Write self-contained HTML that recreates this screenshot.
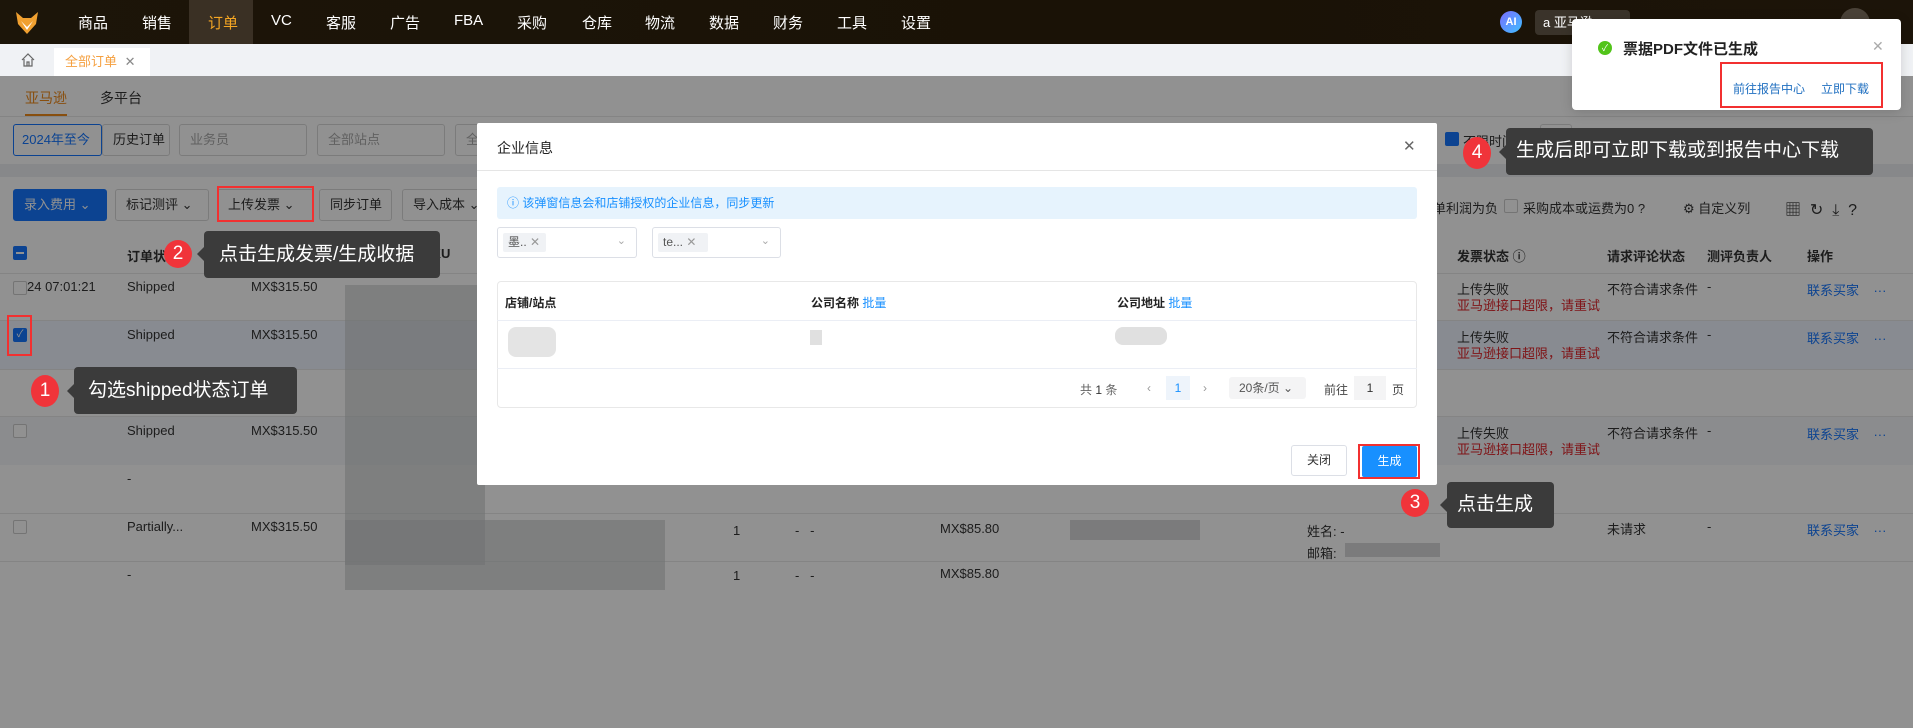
<!DOCTYPE html>
<html><head><meta charset="utf-8"><style>
*{margin:0;padding:0;box-sizing:border-box}
body{width:1913px;height:728px;overflow:hidden;position:relative;background:#fff;font-family:"Liberation Sans","Noto Sans CJK SC",sans-serif;font-size:13px;color:#333}
.a{position:absolute;white-space:nowrap}
.hd{left:0;top:0;width:1913px;height:44px;background:linear-gradient(90deg,#1c1509,#1a1206 60%,#1c1409);top:0}
.nav{color:#fff;font-size:15px;top:12px}
.btn{border:1px solid #d9d9d9;border-radius:3px;background:#fff;height:32px;line-height:30px;padding:0 10px;font-size:13px;color:#333}
.ov{left:0;top:76px;width:1913px;height:652px;background:rgba(0,0,0,0.43)}
.cb{width:14px;height:14px;border:1px solid #ccc;border-radius:2px;background:#fff}
.tip{background:#3b3b3b;color:#fff;border-radius:4px;font-size:19px;line-height:1}
.circ{width:28px;height:28px;border-radius:50%;background:#f0343a;color:#fff;font-size:19px;text-align:center;line-height:28px}
.arr{width:0;height:0;border-top:7px solid transparent;border-bottom:7px solid transparent;border-right:7px solid #3b3b3b}
.blur{background:#c7c9cc}
</style></head><body>
<!-- header -->
<div class="a hd"></div>
<svg class="a" style="left:14px;top:10px" width="26" height="26" viewBox="0 0 26 26"><path d="M2 2 L9 8 L17 8 L24 2 L22 14 L13 24 L4 14Z" fill="#f0a030"/><path d="M7 11 L13 17 L19 11 L13 20Z" fill="#fff"/></svg>
<div class="a" style="left:189px;top:0;width:64px;height:44px;background:#3a3024"></div>
<div class="a nav" style="left:78px">商品</div><div class="a nav" style="left:142px">销售</div><div class="a nav" style="left:208px;color:#f5a623">订单</div><div class="a nav" style="left:271px">VC</div><div class="a nav" style="left:326px">客服</div><div class="a nav" style="left:390px">广告</div><div class="a nav" style="left:454px">FBA</div><div class="a nav" style="left:517px">采购</div><div class="a nav" style="left:582px">仓库</div><div class="a nav" style="left:645px">物流</div><div class="a nav" style="left:709px">数据</div><div class="a nav" style="left:773px">财务</div><div class="a nav" style="left:837px">工具</div><div class="a nav" style="left:901px">设置</div>
<div class="a" style="left:1500px;top:11px;width:22px;height:22px;border-radius:50%;background:linear-gradient(135deg,#7a6cff,#3ec0ff);color:#fff;font-size:11px;font-weight:bold;text-align:center;line-height:22px">AI</div>
<div class="a" style="left:1535px;top:10px;width:95px;height:25px;border-radius:4px;background:#3a332a;color:#fff;font-size:13px;line-height:25px;padding-left:8px">a 亚马逊</div>
<div class="a" style="left:1840px;top:8px;width:30px;height:30px;border-radius:50%;background:#4a4238"></div>
<!-- tabs -->
<div class="a" style="left:0;top:44px;width:1913px;height:32px;background:#f0f2f5"></div>
<svg class="a" style="left:20px;top:52px" width="16" height="16" viewBox="0 0 16 16"><path d="M2 8 L8 2 L14 8 M4 7 V14 H12 V7 M7 14 V10 H9 V14" fill="none" stroke="#666" stroke-width="1.2"/></svg>
<div class="a" style="left:54px;top:48px;width:96px;height:28px;background:#fff;color:#f5a040;line-height:28px;padding-left:11px">全部订单 <span style="color:#888;margin-left:4px">✕</span></div>
<!-- page -->
<div class="a" style="left:25px;top:88px;font-size:14px;color:#f08b1c">亚马逊</div>
<div class="a" style="left:25px;top:114px;width:42px;height:2px;background:#f08b1c"></div>
<div class="a" style="left:100px;top:88px;font-size:14px">多平台</div>
<div class="a" style="left:0;top:116px;width:1913px;height:1px;background:#e8e8e8"></div>
<div class="a btn" style="left:13px;top:124px;border-color:#1677ff;color:#1677ff;width:89px;padding:0 8px">2024年至今</div>
<div class="a btn" style="left:102px;top:124px;width:68px">历史订单</div>
<div class="a btn" style="left:179px;top:124px;width:128px;color:#aaa">业务员</div>
<div class="a btn" style="left:317px;top:124px;width:128px;color:#aaa">全部站点</div>
<div class="a btn" style="left:455px;top:124px;width:40px;color:#aaa">全</div>
<div class="a" style="left:1445px;top:132px;width:14px;height:14px;background:#1677ff;border-radius:2px"></div>
<div class="a" style="left:1463px;top:131px">不限时间</div>
<div class="a btn" style="left:1540px;top:124px;width:32px"></div>
<div class="a" style="left:1580px;top:131px">重置</div>
<div class="a" style="left:0;top:164px;width:1913px;height:13px;background:#eef0f3"></div>
<div class="a btn" style="left:13px;top:189px;width:94px;background:#1677ff;border-color:#1677ff;color:#fff">录入费用 ⌄</div>
<div class="a btn" style="left:115px;top:189px;width:94px">标记测评 ⌄</div>
<div class="a btn" style="left:217px;top:189px;width:97px">上传发票 ⌄</div>
<div class="a btn" style="left:319px;top:189px;width:73px">同步订单</div>
<div class="a btn" style="left:402px;top:189px;width:80px">导入成本 ⌄</div>
<div class="a" style="left:1433px;top:198px">单利润为负</div>
<div class="a cb" style="left:1504px;top:199px"></div>
<div class="a" style="left:1523px;top:198px">采购成本或运费为0 ?</div>
<div class="a" style="left:1683px;top:198px">⚙ 自定义列</div>
<div class="a" style="left:1785px;top:196px;font-size:16px">▦ &nbsp;↻ &nbsp;⤓ &nbsp;?</div>
<!-- table -->
<div class="a" style="left:0;top:320px;width:1913px;height:49px;background:#f0f5ff"></div>
<div class="a" style="left:0;top:416px;width:1913px;height:49px;background:#f5f7fa"></div>
<div class="a" style="left:0;top:273px;width:1913px;height:1px;background:#e8e8e8"></div>
<div class="a" style="left:0;top:320px;width:1913px;height:1px;background:#e8e8e8"></div>
<div class="a" style="left:0;top:369px;width:1913px;height:1px;background:#e8e8e8"></div>
<div class="a" style="left:0;top:416px;width:1913px;height:1px;background:#e8e8e8"></div>
<div class="a" style="left:0;top:513px;width:1913px;height:1px;background:#e8e8e8"></div>
<div class="a" style="left:0;top:561px;width:1913px;height:1px;background:#e8e8e8"></div>
<div class="a" style="left:13px;top:246px;width:14px;height:14px;background:#1677ff;border-radius:2px"><div style="margin:6px 3px;width:8px;height:2px;background:#fff"></div></div>
<div class="a" style="left:127px;top:246px;font-weight:bold">订单状</div>
<div class="a" style="left:423px;top:246px;font-weight:bold">SKU</div>
<div class="a" style="left:1457px;top:246px;font-weight:bold">发票状态 ⓘ</div>
<div class="a" style="left:1607px;top:246px;font-weight:bold">请求评论状态</div>
<div class="a" style="left:1707px;top:246px;font-weight:bold">测评负责人</div>
<div class="a" style="left:1807px;top:246px;font-weight:bold">操作</div>
<div class="a cb" style="left:13px;top:281px"></div><div class="a" style="left:27px;top:279px">24 07:01:21</div><div class="a" style="left:127px;top:279px">Shipped</div><div class="a" style="left:251px;top:279px">MX$315.50</div>
<div class="a" style="left:13px;top:328px;width:14px;height:14px;background:#1677ff;border-radius:2px;color:#fff;font-size:10px;text-align:center;line-height:14px">✓</div><div class="a" style="left:127px;top:327px">Shipped</div><div class="a" style="left:251px;top:327px">MX$315.50</div>
<div class="a cb" style="left:13px;top:424px"></div><div class="a" style="left:127px;top:423px">Shipped</div><div class="a" style="left:251px;top:423px">MX$315.50</div>
<div class="a" style="left:127px;top:471px">-</div>
<div class="a cb" style="left:13px;top:520px"></div><div class="a" style="left:127px;top:519px">Partially...</div><div class="a" style="left:251px;top:519px">MX$315.50</div>
<div class="a" style="left:127px;top:567px">-</div>
<div class="a blur" style="left:345px;top:285px;width:140px;height:280px;opacity:.6"></div>
<div class="a blur" style="left:345px;top:520px;width:320px;height:70px;opacity:.6"></div>
<div class="a" style="left:733px;top:523px">1</div><div class="a" style="left:795px;top:523px">- &nbsp; -</div><div class="a" style="left:940px;top:521px">MX$85.80</div>
<div class="a" style="left:733px;top:568px">1</div><div class="a" style="left:795px;top:568px">- &nbsp; -</div><div class="a" style="left:940px;top:566px">MX$85.80</div>
<div class="a" style="left:1307px;top:521px">姓名: -</div><div class="a" style="left:1307px;top:543px">邮箱:</div>
<div class="a blur" style="left:1070px;top:520px;width:130px;height:20px;opacity:.7"></div>
<div class="a blur" style="left:1345px;top:543px;width:95px;height:14px;opacity:.7"></div>
<div class="a" style="left:1457px;top:279px">上传失败</div><div class="a" style="left:1457px;top:295px;color:#e0252b">亚马逊接口超限，请重试</div>
<div class="a" style="left:1457px;top:327px">上传失败</div><div class="a" style="left:1457px;top:343px;color:#e0252b">亚马逊接口超限，请重试</div>
<div class="a" style="left:1457px;top:423px">上传失败</div><div class="a" style="left:1457px;top:439px;color:#e0252b">亚马逊接口超限，请重试</div>
<div class="a" style="left:1607px;top:279px">不符合请求条件</div><div class="a" style="left:1607px;top:327px">不符合请求条件</div><div class="a" style="left:1607px;top:423px">不符合请求条件</div><div class="a" style="left:1607px;top:519px">未请求</div>
<div class="a" style="left:1707px;top:279px">-</div><div class="a" style="left:1707px;top:327px">-</div><div class="a" style="left:1707px;top:423px">-</div><div class="a" style="left:1707px;top:519px">-</div>
<div class="a" style="left:1807px;top:280px;color:#1677ff">联系买家 &nbsp;&nbsp; ···</div><div class="a" style="left:1807px;top:328px;color:#1677ff">联系买家 &nbsp;&nbsp; ···</div><div class="a" style="left:1807px;top:424px;color:#1677ff">联系买家 &nbsp;&nbsp; ···</div><div class="a" style="left:1807px;top:520px;color:#1677ff">联系买家 &nbsp;&nbsp; ···</div>
<!-- overlay -->
<div class="a ov"></div>
<!-- modal -->
<div class="a" style="left:477px;top:123px;width:960px;height:362px;background:#fff;border-radius:2px"></div>
<div class="a" style="left:497px;top:138px;font-size:14px;color:#222">企业信息</div>
<div class="a" style="left:1403px;top:137px;font-size:15px;color:#666">✕</div>
<div class="a" style="left:477px;top:170px;width:960px;height:1px;background:#e5e5e5"></div>
<div class="a" style="left:497px;top:187px;width:920px;height:32px;background:#e6f3fd;border-radius:3px;color:#1890ff;font-size:12px;line-height:32px;padding-left:10px">ⓘ 该弹窗信息会和店铺授权的企业信息，同步更新</div>
<div class="a" style="left:497px;top:227px;width:140px;height:31px;border:1px solid #dcdfe6;border-radius:3px"><span class="a" style="left:5px;top:5px;height:19px;width:43px;background:#f0f2f5;border-radius:2px;font-size:12px;line-height:19px;padding-left:5px;color:#555">墨.. <span style="color:#999">✕</span></span><span class="a" style="right:10px;top:6px;color:#aaa;font-size:11px">⌄</span></div>
<div class="a" style="left:652px;top:227px;width:129px;height:31px;border:1px solid #dcdfe6;border-radius:3px"><span class="a" style="left:5px;top:5px;height:19px;width:50px;background:#f0f2f5;border-radius:2px;font-size:12px;line-height:19px;padding-left:5px;color:#555">te... <span style="color:#999">✕</span></span><span class="a" style="right:10px;top:6px;color:#aaa;font-size:11px">⌄</span></div>
<div class="a" style="left:497px;top:281px;width:920px;height:127px;border:1px solid #e8e8e8;border-radius:4px"></div>
<div class="a" style="left:497px;top:320px;width:920px;height:1px;background:#ebeef5"></div>
<div class="a" style="left:497px;top:368px;width:920px;height:1px;background:#ebeef5"></div>
<div class="a" style="left:505px;top:294px;font-size:12px;font-weight:bold;color:#222">店铺/站点</div>
<div class="a" style="left:811px;top:294px;font-size:12px;font-weight:bold;color:#222">公司名称 <span style="color:#1890ff;font-weight:normal">批量</span></div>
<div class="a" style="left:1117px;top:294px;font-size:12px;font-weight:bold;color:#222">公司地址 <span style="color:#1890ff;font-weight:normal">批量</span></div>
<div class="a" style="left:508px;top:327px;width:48px;height:30px;background:#e4e4e4;border-radius:8px"></div>
<div class="a" style="left:810px;top:330px;width:12px;height:15px;background:#e0e0e0"></div>
<div class="a" style="left:1115px;top:327px;width:52px;height:18px;background:#e0e0e0;border-radius:8px"></div>
<div class="a" style="left:1080px;top:381px;font-size:12px;color:#666">共 <b style="color:#333;font-weight:normal">1</b> 条</div>
<div class="a" style="left:1147px;top:381px;font-size:12px;color:#999">‹</div>
<div class="a" style="left:1166px;top:376px;width:24px;height:24px;background:#eef4fb;color:#1890ff;text-align:center;line-height:24px;font-size:12px">1</div>
<div class="a" style="left:1203px;top:381px;font-size:12px;color:#999">›</div>
<div class="a" style="left:1229px;top:377px;width:77px;height:22px;background:#f4f4f5;border-radius:3px;font-size:12px;line-height:22px;padding-left:10px;color:#555">20条/页 ⌄</div>
<div class="a" style="left:1324px;top:381px;font-size:12px;color:#444">前往</div>
<div class="a" style="left:1354px;top:376px;width:32px;height:24px;background:#f4f4f5;text-align:center;line-height:24px;font-size:12px">1</div>
<div class="a" style="left:1392px;top:381px;font-size:12px;color:#444">页</div>
<div class="a" style="left:1291px;top:445px;width:56px;height:31px;border:1px solid #dcdfe6;border-radius:3px;font-size:12px;text-align:center;line-height:29px;color:#333">关闭</div>
<div class="a" style="left:1358px;top:444px;width:62px;height:35px;border:2px solid #f23030"></div>
<div class="a" style="left:1362px;top:446px;width:55px;height:31px;background:#1890ff;border-radius:2px;font-size:12px;text-align:center;line-height:31px;color:#fff">生成</div>
<!-- annotations -->
<div class="a" style="left:217px;top:186px;width:97px;height:36px;border:2px solid #f23030"></div>
<div class="a" style="left:7px;top:315px;width:25px;height:41px;border:2px solid #f23030"></div>
<div class="a circ" style="left:164px;top:240px">2</div>
<div class="a arr" style="left:197px;top:247px"></div>
<div class="a tip" style="left:204px;top:231px;width:236px;height:47px;padding:14px 0 0 15px">点击生成发票/生成收据</div>
<div class="a circ" style="left:31px;top:375px;height:32px;line-height:32px">1</div>
<div class="a arr" style="left:67px;top:384px"></div>
<div class="a tip" style="left:74px;top:367px;width:223px;height:47px;padding:14px 0 0 14px">勾选shipped状态订单</div>
<div class="a circ" style="left:1401px;top:489px">3</div>
<div class="a arr" style="left:1440px;top:498px"></div>
<div class="a tip" style="left:1447px;top:482px;width:107px;height:46px;padding:13px 0 0 10px">点击生成</div>
<div class="a circ" style="left:1463px;top:137px;height:32px;line-height:32px">4</div>
<div class="a arr" style="left:1499px;top:145px"></div>
<div class="a tip" style="left:1506px;top:128px;width:367px;height:47px;padding:13px 0 0 10px">生成后即可立即下载或到报告中心下载</div>
<!-- notification -->
<div class="a" style="left:1572px;top:19px;width:329px;height:91px;background:#fff;border-radius:4px;box-shadow:0 2px 12px rgba(0,0,0,.15)"></div>
<div class="a" style="left:1598px;top:41px;width:14px;height:14px;border-radius:50%;background:#52c41a;color:#fff;font-size:9px;text-align:center;line-height:14px">✓</div>
<div class="a" style="left:1623px;top:38px;font-size:15px;font-weight:bold;color:#222">票据PDF文件已生成</div>
<div class="a" style="left:1872px;top:38px;font-size:14px;color:#aaa">✕</div>
<div class="a" style="left:1720px;top:62px;width:163px;height:46px;border:2px solid #f23030"></div>
<div class="a" style="left:1733px;top:80px;font-size:12px;color:#1f6fc0">前往报告中心</div>
<div class="a" style="left:1821px;top:80px;font-size:12px;color:#1f6fc0">立即下载</div>
</body></html>
